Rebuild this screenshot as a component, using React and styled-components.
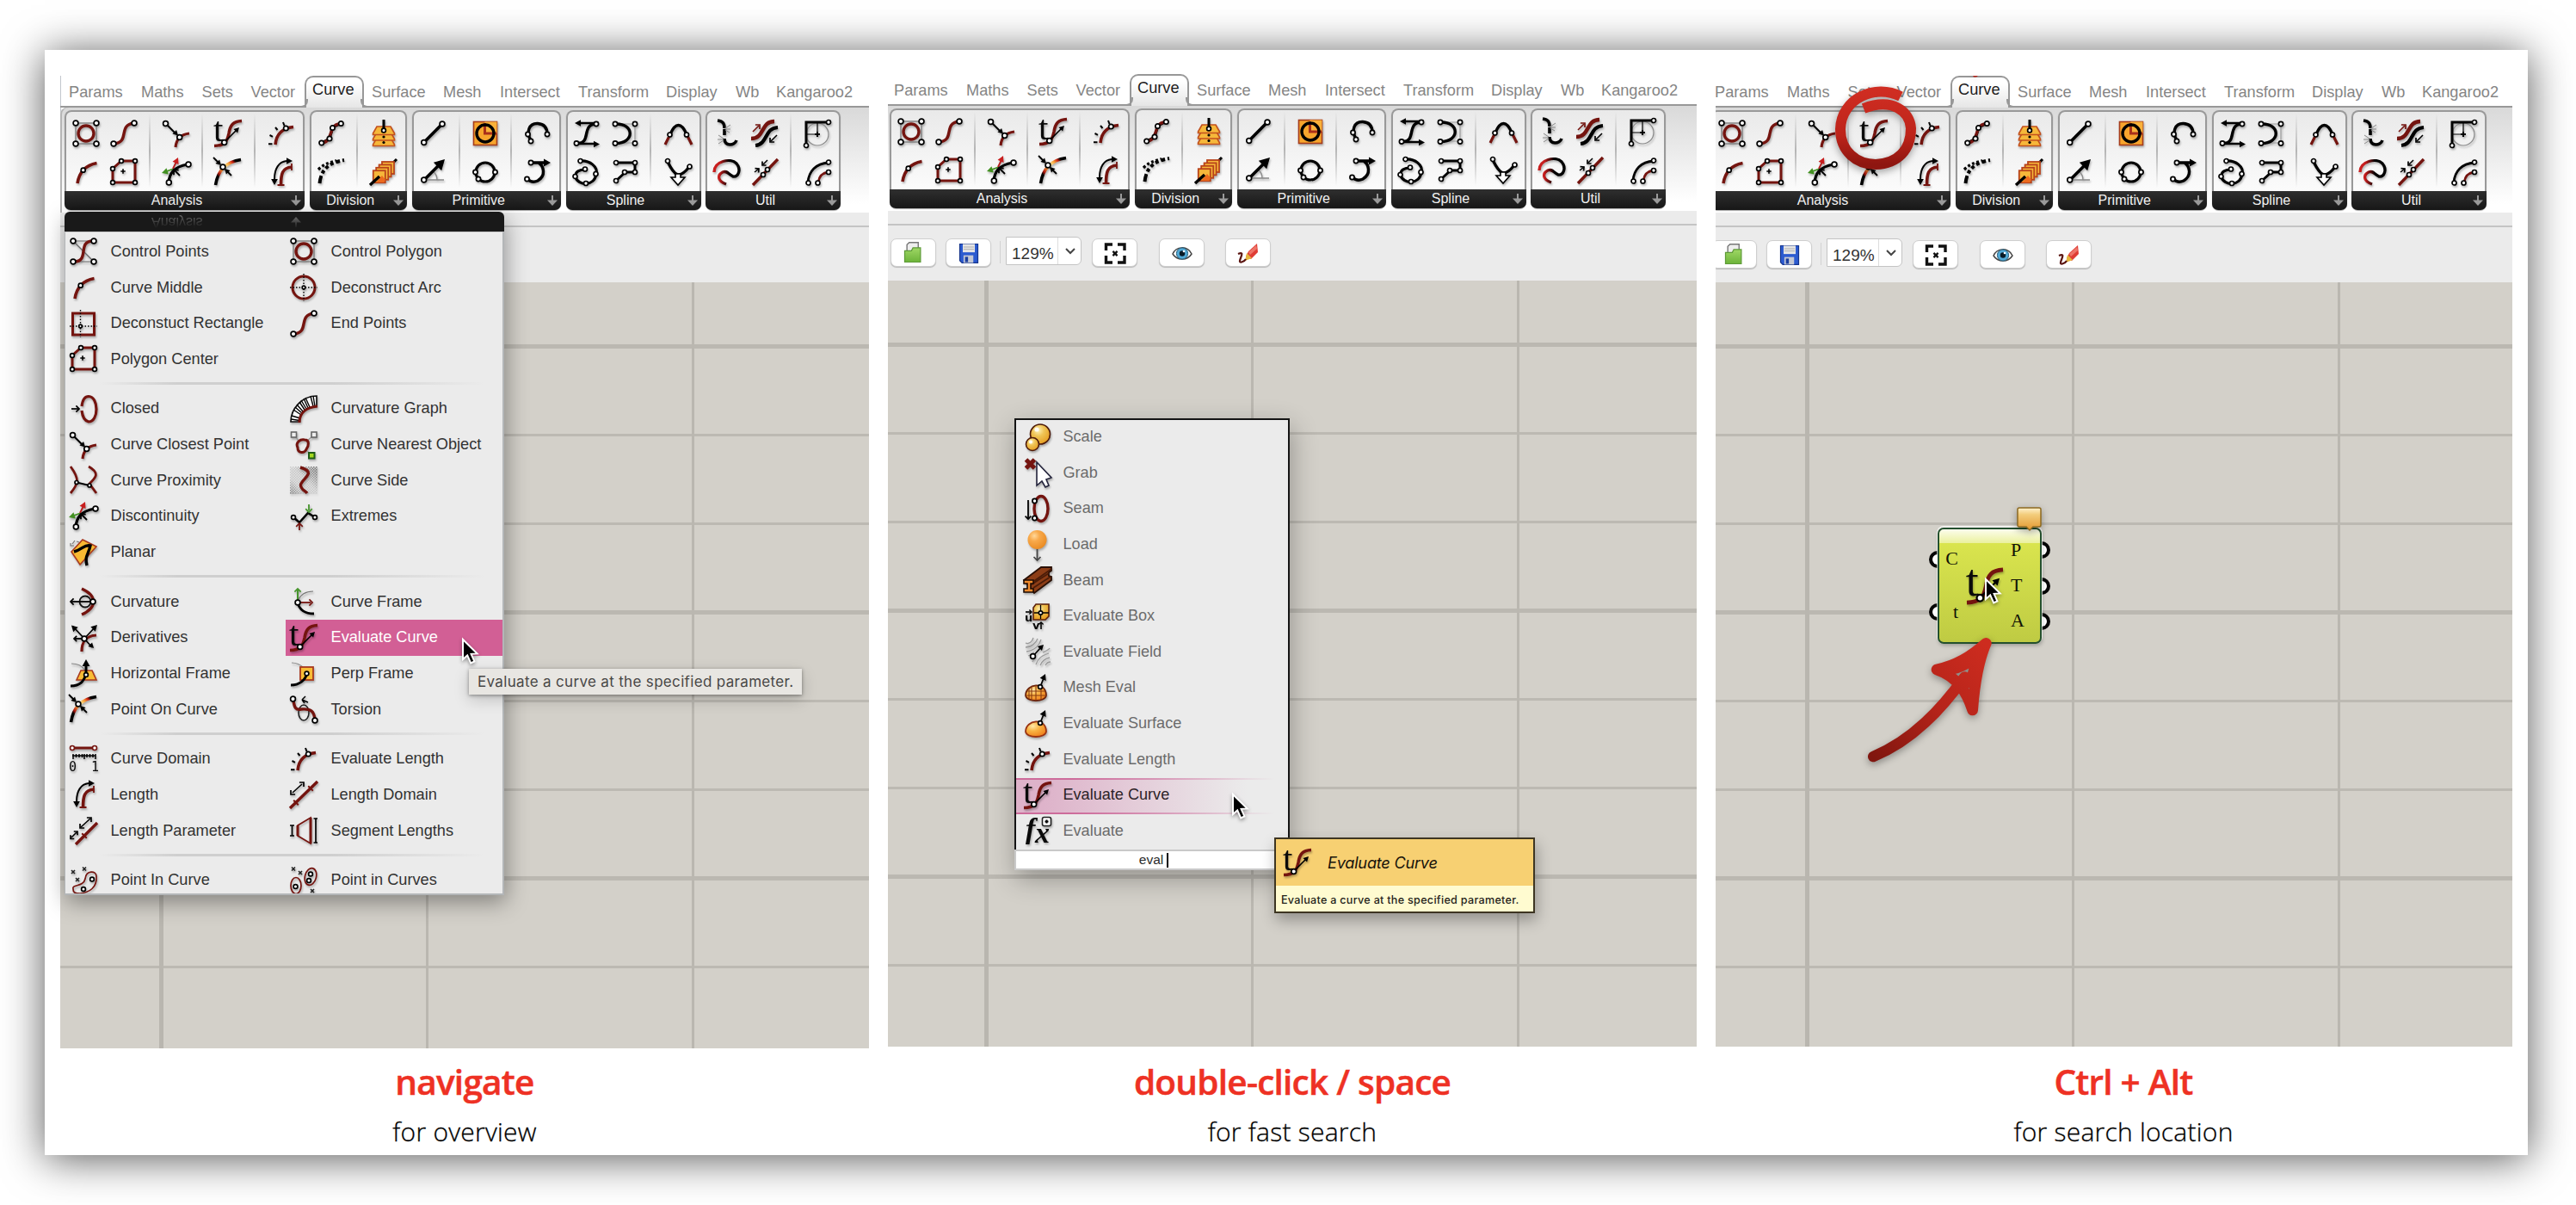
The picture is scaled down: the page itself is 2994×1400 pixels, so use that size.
import React from 'react';
import styled, { createGlobalStyle, css } from 'styled-components';

const GlobalStyle = createGlobalStyle`
  * { box-sizing: border-box; }
  body { margin: 0; background: #fff; font-family: "Liberation Sans", Arial, sans-serif; }
`;

const RED = '#74140f';

/* ---------- icon primitives ---------- */

const HiddenSvg = styled.svg`
  position: absolute;
  width: 0;
  height: 0;
`;

const IconText = styled.text`
  font-family: ${(p) => (p.$mono ? '"DejaVu Sans Mono", monospace' : p.$sans ? '"DejaVu Sans", sans-serif' : '"Liberation Serif", serif')};
  font-size: ${(p) => p.$size}px;
  font-weight: ${(p) => (p.$sans || p.$italic ? 700 : 400)};
  font-style: ${(p) => (p.$italic ? 'italic' : 'normal')};
  fill: #0a0a0a;
`;

const IconSvg = styled.svg`
  width: ${(p) => p.$size}px;
  height: ${(p) => p.$size}px;
  flex: none;
  overflow: visible;
  filter: ${(p) => (p.$flat ? 'none' : 'drop-shadow(1px 2px 1px rgba(0, 0, 0, 0.28))')};
`;

const D = ({ x, y, r = 2.9 }) => <circle cx={x} cy={y} r={r} fill="#fff" stroke="#000" strokeWidth="1.7" />;
const L = ({ d, c = '#000', w = 1.7, ...rest }) => (
  <path d={d} fill="none" stroke={c} strokeWidth={w} {...rest} />
);
const A = ({ x, y, a = 0, s = 6, c = '#000' }) => (
  <path d={`M0 0 L${-s} ${-s * 0.55} L${-s} ${s * 0.55} Z`} fill={c} transform={`translate(${x} ${y}) rotate(${a})`} />
);
const O = ({ x, y, a = 0, s = 5, c = '#000', w = 1.7 }) => (
  <path d={`M${-s} ${-s} L0 0 L${-s} ${s}`} fill="none" stroke={c} strokeWidth={w} transform={`translate(${x} ${y}) rotate(${a})`} />
);
const X = ({ x, y, s = 2, c = '#222', w = 1.6 }) => (
  <L c={c} w={w} d={`M${x - s} ${y - s} L${x + s} ${y + s} M${x + s} ${y - s} L${x - s} ${y + s}`} />
);

const GradientDefs = () => (
  <HiddenSvg aria-hidden="true">
    <defs>
      <linearGradient id="heat" gradientUnits="userSpaceOnUse" x1="1" y1="31" x2="31" y2="1">
        <stop offset="0.22" stopColor="#000" />
        <stop offset="0.3" stopColor="#b01a10" />
        <stop offset="0.45" stopColor="#f8a33c" />
        <stop offset="0.55" stopColor="#fff0a0" />
        <stop offset="0.68" stopColor="#f8a33c" />
        <stop offset="0.78" stopColor="#d02414" />
        <stop offset="0.86" stopColor="#000" />
      </linearGradient>
      <radialGradient id="gold" cx="0.4" cy="0.3" r="0.75">
        <stop offset="0" stopColor="#fff2b8" />
        <stop offset="0.4" stopColor="#efc455" />
        <stop offset="1" stopColor="#e59a1c" />
      </radialGradient>
      <radialGradient id="amber" cx="0.35" cy="0.3" r="0.8">
        <stop offset="0" stopColor="#ffd89a" />
        <stop offset="0.35" stopColor="#f8a94a" />
        <stop offset="1" stopColor="#e8871d" />
      </radialGradient>
      <radialGradient id="dome" cx="0.35" cy="0.3" r="0.8">
        <stop offset="0" stopColor="#ffe9a8" />
        <stop offset="0.4" stopColor="#f9b444" />
        <stop offset="1" stopColor="#ee7a17" />
      </radialGradient>
      <linearGradient id="ring" x1="0" y1="0" x2="0" y2="1">
        <stop offset="0" stopColor="#cf2d22" />
        <stop offset="0.6" stopColor="#bd241a" />
        <stop offset="1" stopColor="#8e1610" />
      </linearGradient>
      <linearGradient id="marker" gradientUnits="userSpaceOnUse" x1="500" y1="560" x2="110" y2="960">
        <stop offset="0" stopColor="#cd2c1f" />
        <stop offset="0.5" stopColor="#b5241a" />
        <stop offset="1" stopColor="#80160f" />
      </linearGradient>
      <linearGradient id="swirl" x1="0" y1="0" x2="1" y2="0">
        <stop offset="0.2" stopColor="#c81e1e" />
        <stop offset="0.6" stopColor="#000" />
      </linearGradient>
      <linearGradient id="leaf" x1="0" y1="0" x2="0" y2="1">
        <stop offset="0" stopColor="#9fd765" />
        <stop offset="1" stopColor="#6cb339" />
      </linearGradient>
      <pattern id="halftone" width="3" height="3" patternUnits="userSpaceOnUse">
        <rect width="1.5" height="1.5" fill="#777" />
        <rect x="1.5" y="1.5" width="1.5" height="1.5" fill="#777" />
      </pattern>
      <linearGradient id="sideFade" x1="0" y1="1" x2="1" y2="0">
        <stop offset="0" stopColor="#fff" />
        <stop offset="0.3" stopColor="#444" />
        <stop offset="0.55" stopColor="#444" />
        <stop offset="0.9" stopColor="#fff" />
      </linearGradient>
      <mask id="sideMask"><rect width="32" height="32" fill="url(#sideFade)" /></mask>
    </defs>
  </HiddenSvg>
);

/* ---------- icon drawings on a 32 x 32 grid ---------- */

const icons = {
  controlPolygon: (
    <>
      <rect x="4" y="4" width="24" height="24" fill="none" stroke="#777" strokeWidth="1.3" />
      <circle cx="16" cy="16" r="9" fill="none" stroke={RED} strokeWidth="3.4" />
      <D x={4} y={4} /><D x={28} y={4} /><D x={4} y={28} /><D x={28} y={28} />
    </>
  ),
  controlPoints: (
    <>
      <L c="#666" w={1.2} d="M4 4H28M4 28H28M4 4L28 28" />
      <L c={RED} w={3.4} d="M5 28C24 28 8 4 27 4" />
      <D x={4} y={4} /><D x={28} y={4} /><D x={4} y={28} /><D x={28} y={28} />
    </>
  ),
  endPoints: (
    <>
      <L c={RED} w={3.4} d="M4 28C24 27 8 6 28 4" />
      <D x={4} y={28} /><D x={28} y={4} />
    </>
  ),
  curveMiddle: (
    <>
      <L c={RED} w={3.6} d="M6 29C8 16 15 8 28.5 5.5" />
      <D x={12.7} y={13.7} r={2.5} />
    </>
  ),
  polygonCenter: (
    <>
      <L c={RED} w={3} d="M3 28H29V3H13L3 12Z" />
      <L w={1.6} d="M12.3 15H17.7M15 12.3V17.7" />
      <D x={3} y={28} r={2.4} /><D x={29} y={28} r={2.4} /><D x={29} y={3} r={2.4} /><D x={13} y={3} r={2.4} /><D x={3} y={12} r={2.4} />
    </>
  ),
  deconstructArc: (
    <>
      <circle cx="16" cy="16" r="13" fill="none" stroke={RED} strokeWidth="3" />
      <L w={1.4} strokeDasharray="1.6 1.9" d="M0 16H32M16 0V32" />
      <D x={16} y={16} r={1.8} />
    </>
  ),
  deconstructRect: (
    <>
      <rect x="3.5" y="4" width="25" height="25" fill="none" stroke={RED} strokeWidth="3" />
      <L w={1.4} strokeDasharray="1.6 1.9" d="M0 19H32M12.5 0V32" />
      <D x={12.5} y={19} r={1.8} />
    </>
  ),
  closed: (
    <>
      <L c={RED} w={3.2} d="M14 13C15 5 18 1.5 22 1.5C34 2 34 31 22 31C18 30 15 27 14 18" />
      <L w={1.7} d="M2 16H10" /><O x={11} y={16} s={3.6} />
    </>
  ),
  curvatureGraph: (
    <>
      <path d="M1 31C1 16 14 1 31 1V13C20 14 11 20 11 31Z" fill="#fff" stroke="#111" strokeWidth="1.7" />
      <L w={1.4} d="M2 24L12 27M4 17L13 23M8 11L15 19M13 6L19 16M18 3L23 14M24 1.5L27 13M1.5 28L11 29.5M6 14L14 21M11 8L17 17M16 4L21 15M27 1L29 13" />
      <L c={RED} w={3.2} d="M11 32C11 20 20 14 32 13" />
    </>
  ),
  closestPoint: (
    <>
      <L w={1.9} d="M3.5 4.5L15 16" /><A x={18} y={18.5} a={45} s={6} />
      <L c={RED} w={3.2} d="M15 32C16 22 22 17 31 16" />
      <D x={3.5} y={4.5} /><D x={19.7} y={20.5} />
    </>
  ),
  nearestObject: (
    <>
      <L c="#999" w={1.3} d="M6 6L11 12M26 6L19 12M19 22L25 28" />
      <path d="M9 19C6 13 12 9 17 10C23 10 22 17 19 21C17 26 9 26 9 19Z" fill="none" stroke={RED} strokeWidth="3" />
      <rect x="1.5" y="1" width="6" height="6" fill="#eee" stroke="#666" strokeWidth="1.6" />
      <rect x="25" y="1" width="6" height="6" fill="#eee" stroke="#666" strokeWidth="1.6" />
      <rect x="22" y="25" width="6.5" height="6.5" fill="#a4d81f" stroke="#1f5c16" strokeWidth="2" />
    </>
  ),
  proximity: (
    <>
      <L c={RED} w={2.8} d="M1 0C12 15 10 20 1 31M22 0C38 9 27 15 23 20L31 31" />
      <L w={2.2} d="M8 18.5L23 22" />
      <D x={8} y={18.5} r={2} /><D x={23} y={22} r={2} />
    </>
  ),
  side: (
    <>
      <rect width="32" height="32" fill="url(#halftone)" mask="url(#sideMask)" />
      <L c={RED} w={3.4} d="M12 1C32 7 14 14 12.5 21C12 27 18 28 20 31" />
    </>
  ),
  discontinuity: (
    <>
      <L c="#429020" w={1.8} d="M13 12L2 16" /><A x={-1} y={17} a={162} s={7} c="#429020" />
      <L c="#b62020" w={2} d="M12 12L17 2" /><A x={18} y={-1} a={-65} s={7} c="#c81e1e" />
      <L w={3.2} d="M7 28C8 18 12 10 29 7" />
      <L w={1.8} d="M20 20L14 14" /><O x={13} y={13.5} a={45} s={-4} w={1.8} />
      <D x={30} y={7} /><D x={7.3} y={28} />
    </>
  ),
  extremes: (
    <>
      <L w={2.6} d="M4 17L11 23L21 12L29 17" />
      <L c="#46952c" w={1.8} d="M22 2V9" /><O x={22} y={11} a={90} s={3.8} c="#46952c" />
      <L c={RED} w={1.8} d="M11 32V25" /><O x={11} y={24} a={-90} s={3.8} c={RED} />
      <D x={4} y={17} r={2.4} /><D x={29} y={17} r={2.4} />
    </>
  ),
  planar: (
    <>
      <path d="M15 1L31 9L12 30L2 15Z" fill="#f8b932" stroke="#a8391e" strokeWidth="1.6" />
      <L w={3.4} d="M5 15C16 12 17 6 24 8C22 18 17 20 20 31" />
      <L c="#777" w={1.2} d="M3 6L6 2M1 5V8H5M8 3L11 4" />
    </>
  ),
  curvature: (
    <>
      <L c={RED} w={3.4} d="M14 1C32 9 32 23 14 31" />
      <circle cx="18" cy="16" r="6.5" fill="none" stroke="#111" strokeWidth="1.8" />
      <L w={1.8} d="M26 16H2" /><O x={1} y={16} a={180} s={3.6} />
      <D x={27} y={16} />
    </>
  ),
  curveFrame: (
    <>
      <L w={2.8} d="M9 17C11 26 17 30 28 30" />
      <L c="#777" w={1.2} d="M9 15C12 8 18 4 27 4" />
      <L c="#46952c" w={2} d="M9 15V2" /><O x={9} y={1} a={-90} s={3.6} c="#46952c" />
      <L c={RED} w={1.8} d="M10 17H24" /><O x={26} y={17} s={3.6} c={RED} />
      <D x={9} y={17} />
    </>
  ),
  derivatives: (
    <>
      <L c={RED} w={3.2} d="M14 32C14 22 17 14 31 13" />
      <L w={1.8} d="M17 17L4 3M17 17L30 3M17 17L26 27M17 17H6" />
      <A x={2} y={1.5} a={-135} s={7} /><A x={32} y={1} a={-45} s={7} /><A x={28} y={28} a={45} s={6} /><O x={5} y={17} a={180} s={3.2} />
      <D x={17} y={17} />
    </>
  ),
  horizontalFrame: (
    <>
      <L c="#888" w={1.1} d="M2 4C9 4 14 6 17 11" />
      <path d="M13 12H26L31 23H8Z" fill="#f8bd36" stroke="#a8391e" strokeWidth="1.6" />
      <L w={3} d="M1 30C13 30 16 24 19 17" />
      <L w={3} d="M19 17V6" /><A x={19} y={-1} a={-90} s={8} />
      <D x={19} y={17} r={2.4} />
    </>
  ),
  perpFrame: (
    <>
      <L c="#888" w={1.1} d="M2 3C8 3 12 5 16 9" />
      <rect x="12" y="8" width="15" height="15" fill="#f8bd36" stroke="#a8391e" strokeWidth="1.8" />
      <L w={3} d="M1 29C11 29 18 23 19.5 16" />
      <D x={19.5} y={15.5} r={2.4} />
    </>
  ),
  pointOnCurve: (
    <>
      <L c="url(#heat)" w={3.6} d="M1.5 31C4 14 14 4 31 1.5" />
      <L w={1.8} d="M-1 -1L6 6M20 20L13 13" />
      <A x={8} y={8} a={45} s={6} /><A x={12} y={12} a={-135} s={6} />
      <D x={10} y={10} />
    </>
  ),
  torsion: (
    <>
      <ellipse cx="16" cy="20" rx="6" ry="9" fill="none" stroke="#222" strokeWidth="1.6" />
      <L c={RED} w={3.4} d="M4 5C5 15 7 17 13 16C24 15 28 18 29 28" />
      <L w={1.5} d="M21 8L14 5M14 5L18 1M14 5L17 9" />
      <D x={3.5} y={4} /><D x={29} y={29} />
    </>
  ),
  curveDomain: (
    <>
      <L c={RED} w={3} d="M3 3H29" />
      <circle cx="3" cy="3" r="2.5" fill="#fff" stroke={RED} strokeWidth="1.6" />
      <circle cx="29" cy="3" r="2.5" fill="#fff" stroke={RED} strokeWidth="1.6" />
      <L w={1.5} d="M3 12H30M4 10V16M7.5 10V14M11 10V14M14.5 10V14M17 10V16M20 10V14M23.5 10V14M27 10V14M30 10V16" />
      <IconText x="-1" y="30" $size={15} $mono>0</IconText>
      <IconText x="25" y="30" $size={15} $mono>1</IconText>
    </>
  ),
  evaluateLength: (
    <>
      <L c={RED} w={3.6} d="M9 29C10 18 16 10 30 8.5" />
      <L w={2} d="M1 28.3H5.5M2.5 18L6 19.8M9 9L11.5 12M18 3L19.5 7" />
      <D x={21.3} y={10} r={2.7} />
    </>
  ),
  length: (
    <>
      <L w={2} d="M8 24C8 12 13 4 22 3" />
      <A x={29} y={3} a={0} s={7} /><A x={8} y={31} a={90} s={7} />
      <L c={RED} w={3.6} d="M15.5 31C15.5 18 17 11 28 10" />
      <L c={RED} w={1.8} d="M11.5 31H19.5M28 6V14" />
    </>
  ),
  lengthDomain: (
    <>
      <L c={RED} w={3.4} d="M0 32L32 1" />
      <X x={7} y={25.5} s={2.8} c={RED} w={2} /><X x={24} y={9} s={2.8} c={RED} w={2} />
      <L w={1.6} d="M3 14L14 4" /><O x={1} y={16} a={135} s={3.6} /><O x={16} y={2} a={-45} s={3.6} />
    </>
  ),
  lengthParameter: (
    <>
      <L c={RED} w={3.4} d="M7 32L32 7" />
      <X x={17} y={22} s={2.8} c={RED} w={2} />
      <L w={1.6} d="M13 12L24 2M2 24L8 18" /><O x={12} y={13} a={135} s={3.6} /><O x={25} y={1} a={-45} s={3.6} /><O x={1} y={25.5} a={135} s={3} /><O x={9} y={17} a={-45} s={3} />
    </>
  ),
  segmentLengths: (
    <>
      <L c={RED} w={1.8} d="M9 10L24 1V31L9 22Z" />
      <L c={RED} w={3} d="M9 10V22M24 1V31" />
      <L w={1.7} d="M2.5 10V22M0 10H5M0 22H5M30 2V30M27.5 2H32M27.5 30H32" />
    </>
  ),
  pointInCurve: (
    <>
      <L c={RED} w={1.7} d="M4 26C2 20 16 24 18 14C19 4 31 4 31 11C32 24 23 30 12 31C6 31 4 30 4 26Z" />
      <X x={4} y={6} /><X x={17} y={2.5} /><X x={9} y={15} />
      <D x={26} y={14.5} r={2.4} /><D x={16} y={26} r={2.4} />
    </>
  ),
  pointInCurves: (
    <>
      <ellipse cx="7" cy="22" rx="6" ry="9.5" fill="none" stroke={RED} strokeWidth="1.7" />
      <ellipse cx="24" cy="11.5" rx="6.5" ry="10" fill="none" stroke={RED} strokeWidth="1.7" transform="rotate(15 24 11.5)" />
      <X x={4} y={2.5} /><X x={12} y={7} /><X x={26} y={28} />
      <D x={24} y={8.5} r={2.4} /><D x={22} y={16} r={2.4} /><D x={6.5} y={23} r={2.4} />
    </>
  ),
  evaluateCurve: (
    <>
      <L c={RED} w={3.6} d="M0 30.5C12 30 15 26 17 16C18.5 6 22 2 32 1.5" />
      <L w={1.7} d="M12 26L26 12" /><A x={29} y={9} a={-45} s={6} />
      <IconText x="-1" y="24.5" $size={41}>t</IconText>
      <D x={11.7} y={26.5} r={2.9} />
    </>
  ),
  divide: (
    <>
      <L w={3} d="M4.7 27L14 22L18 9L27 4.5" />
      <L c={RED} w={3.4} d="M6 27C14 26 14 18 17.5 10M18 10C20 6 22 5 27 5" />
      <D x={4.7} y={27} r={2.7} /><D x={14} y={22} r={2.7} /><D x={17.5} y={9.5} r={2.7} /><D x={27.3} y={4.5} r={2.7} />
    </>
  ),
  dash: (
    <>
      <L w={4} strokeDasharray="9 3 4 3 4 3 4 3 5 3 5" d="M2.5 29C4 14 12 5 31 2" />
      <L w={3.2} strokeDasharray="3 2.6" d="M1 13C8 6 14 5 22 2.5" />
    </>
  ),
  contour: (
    <>
      {[21, 14.5, 8].map((y) => (
        <path key={y} d={`M8 ${y}H24L28.5 ${y + 8}V${y + 9.5}H3.5V${y + 8}Z`} fill="#f6b73a" stroke="#c2501e" strokeWidth="1.6" />
      ))}
      <L w={3} d="M16 0V10" /><D x={16} y={12.5} r={2.4} />
      <circle cx="16" cy="20" r="1.6" /><circle cx="16" cy="26.5" r="1.6" />
    </>
  ),
  frames: (
    <>
      <L w={3} d="M26 6L31 1" />
      {[0, 1, 2, 3].map((i) => (
        <rect key={i} x={14 - i * 3.4} y={4 + i * 3.4} width="14" height="14" fill="#f6b73a" stroke="#b8431b" strokeWidth="1.8" />
      ))}
      <path d="M7 28L14 20L18 25L16 28Z" fill="#ec6a1e" />
      <L w={3.4} d="M0 31L11 21" />
    </>
  ),
  line: (<><L w={3.6} d="M4.7 26.5L26 5" /><D x={4.7} y={26.5} /><D x={26} y={5} /></>),
  vectorLine: (
    <>
      <L c="#888" w={1.3} d="M5 25H28M20 25C20 20 18 17 15 15" />
      <L w={3.6} d="M5 25L22 8" /><A x={29} y={1} a={-45} s={12} /><D x={4.7} y={25} />
    </>
  ),
  circle: (
    <>
      <rect x="2.5" y="2.5" width="27" height="27" fill="#f7a52d" stroke="#a63c1c" strokeWidth="1.6" />
      <path d="M15.5 2.5H29.5V16H15.5Z" fill="#f9b13a" /><L c="#a9301a" w={3} d="M15.5 4V16H29" />
      <circle cx="16" cy="16" r="10" fill="none" stroke="#000" strokeWidth="3.4" />
    </>
  ),
  circle3: (
    <>
      <circle cx="16" cy="16" r="11" fill="none" stroke="#000" strokeWidth="3.2" />
      <D x={4.5} y={16} r={2.6} /><D x={27.5} y={16} r={2.6} /><D x={8} y={24} r={2.6} />
    </>
  ),
  arc: (
    <>
      <L w={3.4} d="M8 24C2 14 6 4 16 4.5C24 5 27 10 27 17" />
      <D x={4.5} y={17} r={2.6} /><D x={27} y={17} r={2.6} /><D x={8} y={25} r={2.6} />
    </>
  ),
  arcSed: (
    <>
      <L w={3.4} d="M4 24C8 28 12 28 16 26C26 20 23 9 17 5M8 5H25" /><A x={31} y={5} s={8} />
      <D x={8} y={5} r={2.6} /><D x={3.5} y={24} r={2.6} />
    </>
  ),
  tangentCurve: (
    <>
      <L w={3.4} d="M5 27.5C22 28 9 5 27 5" /><L w={2.4} d="M8 4H27M4 28H24" />
      <A x={2} y={4} a={180} s={7} /><A x={31} y={28.5} s={7} />
      <D x={27} y={5} r={2.6} /><D x={4} y={27.5} r={2.6} />
    </>
  ),
  bezier: (
    <>
      <L c="#999" w={1.2} d="M4 5H27V27H4" />
      <L w={3.4} d="M4 5C27 4 27 28 4 27.5" />
      <D x={4} y={5} r={2.6} /><D x={27} y={5} r={2.6} /><D x={4} y={27.5} r={2.6} /><D x={27} y={27.5} r={2.6} />
    </>
  ),
  interpolate: (
    <>
      <L w={3.2} d="M8 3C20 2 29 10 27 18C25 33 6 32 3 22C2 15 8 13 14 13" />
      <D x={8.5} y={3} r={2.5} /><D x={26.5} y={18} r={2.5} /><D x={15} y={29} r={2.5} /><D x={2.5} y={21} r={2.5} /><D x={14} y={12.5} r={2.5} />
    </>
  ),
  polyline: (
    <>
      <L w={3} d="M5 5H27V16H16L5 26" />
      <D x={5} y={5} r={2.5} /><D x={27} y={5} r={2.5} /><D x={27} y={16} r={2.5} /><D x={15} y={16} r={2.5} /><D x={5} y={26} r={2.5} />
    </>
  ),
  blend: (
    <>
      <L c={RED} w={3.2} d="M1 29L7 17M26 17L32 29" />
      <L w={3.4} d="M7 17C13 3 20 3 26 17" />
      <D x={6.5} y={17.5} r={2.5} /><D x={26} y={17.5} r={2.5} />
    </>
  ),
  catenary: (
    <>
      <L w={3.4} d="M4 4C12 20 17 25 29 10" />
      <path d="M13 18H19V22H24L16 31L8 22H13Z" fill="#fff" stroke="#000" strokeWidth="1.6" />
      <D x={4} y={3} r={2.5} /><D x={29.5} y={9.5} r={2.5} />
    </>
  ),
  explode: (
    <>
      <L w={3.6} d="M5 1C12 2 13 5 13 10M13 11V18M13 22C13 32 25 30 27 24" />
      <L c="#888" w={1} d="M14 10L20 6M14 11H20M14 12L19 15M12 22L6 18M12 23H5M12 24L6 28" />
    </>
  ),
  flip: (
    <>
      <L c={RED} w={4.6} d="M0 22C16 22 11 2 27 2" />
      <L w={4.2} d="M5 30C20 28 15 10 31 9" />
      <L c={RED} w={1.6} d="M2 14L9 7" /><O x={10} y={6} a={-45} s={3.6} c={RED} />
      <L w={1.6} d="M30 18L23 25" /><O x={22} y={26} a={135} s={3.6} />
    </>
  ),
  rebuild: (
    <path d="M1 16C1 3 20 -1 27 6C33 13 29 22 23 21C17 18 16 14 11 16C5 19 4 26 15 30" fill="none" stroke="url(#swirl)" strokeWidth="3.4" />
  ),
  join: (
    <>
      <L c={RED} w={3.4} d="M2 31L31 1" />
      <L w={1.5} d="M4 16L9 12M19 2L14 7" /><O x={9} y={12} a={-40} s={3.2} /><O x={13} y={8} a={135} s={3.2} />
      <D x={14} y={19} r={2.5} /><D x={19} y={13} r={2.5} />
    </>
  ),
  fillet: (
    <>
      <circle cx="16" cy="17" r="13" fill="none" stroke="#888" strokeWidth="1.2" />
      <L w={1.2} d="M3 17H16V4" /><path d="M13 17H19M16 14V20" stroke="#000" strokeWidth="2" />
      <L w={3} d="M3 30V3H29" />
      <D x={3} y={30} r={2.5} /><D x={29} y={3} r={2.5} />
    </>
  ),
  offset: (
    <>
      <L w={2.8} d="M5 28C6 15 14 6 29 5" />
      <L c={RED} w={2.8} d="M17 28C18 21 21 17 29 16" />
      <D x={5.5} y={28.5} r={2.5} /><D x={29} y={4.5} r={2.5} /><D x={16.5} y={28.5} r={2.5} /><D x={29} y={16} r={2.5} />
    </>
  ),
  scale: (
    <>
      <circle cx="19" cy="12.5" r="11.5" fill="url(#gold)" stroke="#4d1a0a" strokeWidth="1.6" />
      <circle cx="10" cy="24" r="7.5" fill="url(#gold)" stroke="#4d1a0a" strokeWidth="1.6" />
      <circle cx="8" cy="21.5" r="2" fill="#fff" /><circle cx="15" cy="7" r="2.6" fill="#fff" opacity="0.9" />
    </>
  ),
  grab: (
    <>
      <X x={7.5} y={6} s={5} c={RED} w={5} />
      <path d="M15 4V31L21 26L25 33L29 31L26 24L32 22Z" fill="#fff" stroke="#24243c" strokeWidth="1.6" />
    </>
  ),
  seam: (
    <>
      <ellipse cx="20" cy="16" rx="8" ry="14.5" fill="none" stroke={RED} strokeWidth="3.4" />
      <L w={1.8} d="M5 6V27" /><O x={5} y={28} a={90} s={3.4} />
      <D x={12.5} y={7} r={2.6} /><D x={12.5} y={27} r={2.6} />
    </>
  ),
  load: (
    <>
      <L c="#444" w={1.8} d="M15.5 20V33" /><O x={15.5} y={34} a={90} s={4} c="#444" />
      <circle cx="15.5" cy="10" r="11" fill="url(#amber)" />
    </>
  ),
  beam: (
    <>
      <path d="M0 16L20 1H32V5L29 7V11L32 12V16L12 31Z" fill="#8c3d16" stroke="#2a1005" strokeWidth="1.8" />
      <L c="#4a1c08" w={1.6} d="M12 17L32 3M9 21L29 8M11 25L31 12" />
      <path d="M0 16H11V20H8V26H11V30H0V26H4V20H0Z" fill="#ef8a2c" stroke="#1d0b03" strokeWidth="1.6" />
    </>
  ),
  evaluateBox: (
    <>
      <path d="M14 2H29V16L25 20H11V6Z" fill="url(#gold)" stroke="#5a210c" strokeWidth="1.6" />
      <L w={1.3} d="M19.5 3V19M12 12H29" /><D x={19.5} y={12} r={2.2} />
      <L w={1.6} d="M2 11H8" /><O x={9} y={11} s={2.6} w={1.4} />
      <L w={1.6} d="M20 31V24" /><O x={20} y={23} a={-90} s={2.6} w={1.4} />
      <IconText x="1" y="22" $size={13} $sans>u</IconText><IconText x="10" y="31" $size={13} $sans>v</IconText>
    </>
  ),
  evaluateField: (
    <>
      <L c="#999" w={1.3} d="M2 6C6 8 10 4 11 0M2 11C9 11 14 6 16 1M3 16C12 15 18 9 20 2M5 21C8 20 10 18 12 17M14 31C16 24 22 20 29 18M19 32C21 27 25 24 30 23M25 32C26 30 28 28 31 28M10 28C11 26 12 25 13 23M22 17C26 15 29 14 30 12" />
      <L w={1.8} d="M10 22L20 11" /><A x={23} y={8} a={-45} s={6.5} /><D x={10.5} y={21.5} />
    </>
  ),
  meshEval: (
    <>
      <path d="M2 25C2 11 26 8 26 25C25 33 3 33 2 25Z" fill="url(#dome)" stroke="#6b230c" strokeWidth="1.8" />
      <L c="#8a3a10" w={1.1} d="M3 20H25M2 25H26M9 14V31M14 13V31M20 14V30M6 17V29" />
      <L w={1.8} d="M19 15L23 5" /><A x={25} y={0} a={-66} s={7} /><D x={19} y={15} r={2.4} />
    </>
  ),
  evaluateSurface: (
    <>
      <path d="M2 25C2 11 26 8 26 25C25 33 3 33 2 25Z" fill="url(#dome)" stroke="#9a3312" strokeWidth="1.8" />
      <L w={1.8} d="M19 15L23 5" /><A x={25} y={0} a={-66} s={7} /><D x={19} y={15} r={2.4} />
    </>
  ),
  evaluate: (
    <>
      <IconText x="2" y="25" $size={34} $italic>f</IconText>
      <IconText x="13" y="30" $size={34} $italic>x</IconText>
      <rect x="21.5" y="0.5" width="10" height="10" rx="2" fill="#fff" stroke="#222" strokeWidth="1.6" />
      <L w={2} d="M24.5 5.5H28.5M26.5 3.5V7.5" />
    </>
  ),
  open: (
    <>
      <path d="M7 14V5L10 2H22V14Z" fill="#eee" stroke="#777" strokeWidth="1.6" />
      <path d="M4 28V13H13L15 9H25V28Z" fill="url(#leaf)" stroke="#5d9a37" strokeWidth="1.4" />
    </>
  ),
  save: (
    <>
      <path d="M4 4H28V29H7L4 26Z" fill="#2c5bd0" stroke="#16358c" strokeWidth="1.4" />
      <rect x="8" y="4" width="16" height="11" fill="#e5e5e5" /><L c="#aaa" w={1} d="M9 8H23M9 11H23" />
      <rect x="9" y="19" width="13" height="10" fill="#c4c8d4" /><rect x="11" y="21" width="4" height="7" fill="#1c3f9f" />
    </>
  ),
  extents: (
    <>
      <L c="#111" w={3.4} d="M5.5 13V6H13M19 6H27V13M27 19V27H19M13 27H5.5V19" />
      <X x={16} y={16.5} s={2.6} c="#111" w={2.2} /><circle cx="16" cy="16.5" r="1.8" fill="#111" />
    </>
  ),
  eye: (
    <>
      <path d="M5 17C9 8 22 7 27 17C22 25 10 25 5 17Z" fill="#fff" stroke="#444" strokeWidth="1.5" />
      <circle cx="16" cy="16.5" r="6.6" fill="#51a9d6" stroke="#28617e" strokeWidth="1" />
      <circle cx="16" cy="16.5" r="3.2" fill="#081a26" /><circle cx="18" cy="14" r="1.3" fill="#fff" />
    </>
  ),
  sketch: (
    <>
      <path d="M26 5L27 15L19 23L13 20L16 14Z" fill="#df3d35" />
      <path d="M25 7L16 15L18 18L26 11Z" fill="#ee7468" />
      <path d="M14 16L20 22L12 25Z" fill="#e6b53c" />
      <L c="#5a1410" w={2.2} d="M4 17C15 12 1 28 8 26.5C10 26 12 25 13 23" />
    </>
  ),
};

const Icon = ({ name, size = 32, flat }) => (
  <IconSvg viewBox="0 0 32 32" $size={size} $flat={flat}>{icons[name]}</IconSvg>
);

/* ---------- page ---------- */

const Page = styled.main`
  width: 2994px;
  height: 1400px;
  padding: 58px 52px;
  background: #fff;
  overflow: hidden;
`;

const Card = styled.div`
  display: flex;
  gap: 22px;
  width: 2886px;
  height: 1284px;
  padding-left: 18px;
  background: #fff;
  box-shadow: 0 4px 46px rgba(0, 0, 0, 0.66);
`;

const Column = styled.section`
  width: ${(p) => p.$width}px;
  padding-top: ${(p) => p.$top}px;
`;

const Panel = styled.div`
  position: relative;
  display: flex;
  flex-direction: column;
  height: ${(p) => p.$height}px;
  overflow: ${(p) => (p.$framed ? 'visible' : 'hidden')};
  box-shadow: ${(p) => (p.$framed ? 'inset 1px 0 #c2c6cd' : 'none')};
`;

const TabStrip = styled.nav`
  display: flex;
  flex: none;
  height: 37px;
  border-bottom: 2px solid #989898;

  > :first-child {
    margin-left: ${(p) => p.$shift + 5}px;
  }
`;

const Tab = styled.span`
  flex: none;
  width: ${(p) => p.$width}px;
  padding-top: 9px;
  font-size: 18.2px;
  line-height: 21px;
  color: #858585;
`;

const ActiveTab = styled.span`
  position: relative;
  flex: none;
  width: 69px;
  height: 37px;
  margin-right: 9px;
  padding: 4px 0 0 7px;
  border: 2px solid #989898;
  border-bottom: 0;
  border-radius: 10px 10px 0 0;
  background: linear-gradient(#fff 20%, #e6e6e6);
  font-size: 18.2px;
  line-height: 21px;
  color: #1c1c1c;

  &::before,
  &::after {
    content: '';
    position: absolute;
    bottom: 0;
    width: 8px;
    height: 8px;
    border-bottom: 2px solid #989898;
  }

  &::before {
    left: -8px;
    border-right: 2px solid #989898;
    border-bottom-right-radius: 8px;
  }

  &::after {
    right: -8px;
    border-left: 2px solid #989898;
    border-bottom-left-radius: 8px;
  }
`;

const Ribbon = styled.div`
  display: flex;
  flex: none;
  gap: 5.5px;
  height: 122px;
  padding-top: 3px;
  background: linear-gradient(#d9d9d9, #fff 92%);
  ${(p) => p.$framed && css`
    box-shadow: inset 2px 0 #b5b5b5;
    border-top-left-radius: 8px;
  `}

  > :first-child {
    margin-left: ${(p) => p.$shift}px;
  }
`;

const Group = styled.div`
  display: flex;
  flex: none;
  flex-direction: column;
  width: ${(p) => p.$width}px;
  height: 116px;
  border-radius: 8px;
  box-shadow: inset 0 0 0 2px #999, 0 1px 1px rgba(0, 0, 0, 0.35);
  background: linear-gradient(#e9e9e9, #fbfbfb 80%);
`;

const GroupBody = styled.div`
  display: flex;
  height: 94px;
`;

const Section = styled.div`
  display: flex;
  flex-wrap: wrap;
  align-content: flex-start;
  justify-content: center;
  width: ${(p) => p.$width}px;
  padding: 4px ${(p) => (p.$first ? 4 : 0)}px 0 ${(p) => (p.$last ? 4 : 0)}px;
  border-right: ${(p) => (p.$last ? 0 : 2)}px solid;
  border-image: linear-gradient(transparent 5%, #b5b5b5 50%, transparent 95%) 1;
`;

const ToolCell = styled.span`
  display: flex;
  align-items: center;
  justify-content: center;
  width: 44.5px;
  height: 45px;
`;

const GroupFooter = styled.div`
  display: flex;
  align-items: center;
  height: 22px;
  padding-right: 4px;
  border-radius: 0 0 7px 7px;
  background: linear-gradient(#2f2f2f, #171717);
  color: #f1f1f1;
  font-size: 16px;
  line-height: 20px;
`;

const GroupTitle = styled.span`
  flex: 1;
  padding-right: 2px;
  text-align: center;
`;

const FooterArrow = styled.svg`
  width: 12px;
  height: 13px;
`;

const Toolbar = styled.div`
  display: flex;
  flex: none;
  align-items: flex-start;
  height: 81px;
  padding-top: 32px;
  background: linear-gradient(#ebebeb 0 15px, #c4c4c4 15px 17px, #ebebeb 17px);

  > :first-child {
    margin-left: ${(p) => p.$shift + 1}px;
  }
`;

const ToolButton = styled.button`
  display: flex;
  align-items: center;
  justify-content: center;
  flex: none;
  width: 53px;
  height: 33px;
  margin: 0 ${(p) => p.$after}px 0 0;
  padding: 0;
  border: 1px solid #cfcfcf;
  border-radius: 7px;
  background: #fff;
  box-shadow: 0 1px 1px rgba(0, 0, 0, 0.22);
`;

const ToolDivider = styled.i`
  width: 1px;
  height: 26px;
  margin: 3px 6px 0 0;
  background: #d2d2d2;
`;

const ZoomBox = styled.div`
  display: flex;
  align-items: center;
  width: 88px;
  height: 33px;
  margin: -2px 12px 0 0;
  border: 1px solid #c4c4c4;
  border-radius: 0 6px 6px 0;
  background: #fff;
  color: #333;
  font-size: 19px;
`;

const ZoomValue = styled.span`
  width: 60px;
  padding: 6px 0 0 6px;
  border-right: 1px solid #ddd;
  line-height: 25px;
`;

const Chevron = styled.svg`
  width: 12px;
  height: 8px;
  margin-left: 8px;
`;

const Canvas = styled.div`
  flex: 1;
  background-color: #d3d0c9;
  background-image:
    linear-gradient(#b9b6af, #b9b6af),
    linear-gradient(90deg, transparent 306px, #bab7b0 306px 309px),
    linear-gradient(#bbb8b1 0 5px, transparent 5px 104px, #bcb9b2 104px 107px, transparent 107px 207px, #bcb9b2 207px 210px, transparent 210px);
  background-size: 5px 100%, 309px 100%, 100% 309px;
  background-repeat: no-repeat, repeat, repeat;
  background-position: ${(p) => p.$x - 2}px 0, ${(p) => p.$x + 2}px 0, 0 72px;
`;

const Caption = styled.div`
  margin-top: ${(p) => p.$top}px;
  padding-left: ${(p) => p.$indent || 0}px;
  text-align: center;
  font-family: "Open Sans", sans-serif;
`;

const Headline = styled.h2`
  margin: 0;
  font-size: 40.5px;
  line-height: 54px;
  font-weight: 600;
  letter-spacing: -0.75px;
  color: #ee3124;
  -webkit-text-stroke: 0.5px #ee3124;
`;

const Subline = styled.p`
  margin: 10px 0 0;
  font-size: 30px;
  line-height: 42px;
  font-weight: 300;
  letter-spacing: 0.25px;
  color: #000;
  -webkit-text-stroke: 0.3px #000;
`;

/* ---------- flyout menu ---------- */

const Menu = styled.div`
  position: absolute;
  left: 5px;
  top: 158px;
  width: 511px;
  height: 794px;
  border-radius: 6px 6px 0 0;
  background: #ebebeb;
  box-shadow: 2px 8px 26px rgba(0, 0, 0, 0.38);
  overflow: hidden;
`;

const MenuHeader = styled.div`
  display: flex;
  align-items: center;
  height: 23px;
  padding-left: 101px;
  background: #191919;
  color: #6c6c6c;
  font-size: 16px;
`;

const Mirrored = styled.span`
  display: inline-flex;
  align-items: center;
  gap: 102px;
  transform: scaleY(-1);
  mask-image: linear-gradient(transparent 10%, #000);
  line-height: 18px;
`;

const MenuBody = styled.div`
  height: 771px;
  padding-top: 1.5px;
  border: 2px solid #b3b6b8;
  border-top: 1px solid #c8c8c8;
  border-left-width: 1px;
  overflow: hidden;
`;

const MenuSection = styled.div`
  display: grid;
  grid-template-columns: 256px 1fr;
  grid-auto-rows: 41.7px;
`;

const MenuSeparator = styled.hr`
  height: 3px;
  margin: 6px 20px 6.8px 40px;
  border: 0;
  background: linear-gradient(90deg, transparent, #cfcfcf 20% 60%, transparent);
`;

const MenuItem = styled.div`
  display: flex;
  align-items: center;
  gap: 15.5px;
  padding-left: 5px;
  font-size: 18.2px;
  color: ${(p) => (p.$active ? '#fff' : '#323232')};
  background: ${(p) => (p.$active ? '#d25f95' : 'transparent')};
`;

const Hint = styled.div`
  position: absolute;
  left: 475px;
  top: 689px;
  width: 387px;
  height: 30px;
  padding-left: 10px;
  background: #e8e6e2;
  box-shadow: 0 1px 4px rgba(0, 0, 0, 0.4), 0 6px 18px rgba(0, 0, 0, 0.18);
  font-family: Inter, sans-serif;
  font-size: 17px;
  line-height: 30px;
  letter-spacing: 0.33px;
  color: #484746;
  white-space: nowrap;
`;

const CursorSvg = styled.svg`
  position: absolute;
  left: ${(p) => p.$x}px;
  top: ${(p) => p.$y}px;
  width: 20px;
  height: 30px;
  overflow: visible;
  filter: drop-shadow(0 2px 2px rgba(0, 0, 0, 0.4));
`;

/* ---------- search popup ---------- */

const Search = styled.div`
  position: absolute;
  left: 147px;
  top: 400px;
  width: 320px;
  box-shadow: 2px 10px 28px rgba(0, 0, 0, 0.3);
  background: #ebebeb;
`;

const SearchList = styled.div`
  border: 2px solid #141414;
  border-bottom: 0;
`;

const SearchItem = styled.div`
  display: flex;
  align-items: center;
  gap: 13.5px;
  height: 41.6px;
  padding: 0 0 2px 9px;
  font-size: 18.1px;
  color: ${(p) => (p.$active ? '#2c2327' : '#6b6b6b')};
  ${(p) => p.$active && css`
    background:
      linear-gradient(90deg, #cd6c9b 20%, transparent 95%) top / 100% 2px no-repeat,
      linear-gradient(90deg, #cd6c9b 20%, transparent 95%) bottom / 100% 2px no-repeat,
      linear-gradient(90deg, #deb3ca 10%, #ebebeb 85%);
  `}
`;

const SearchInput = styled.div`
  display: flex;
  align-items: center;
  justify-content: center;
  gap: 4px;
  height: 24px;
  padding-left: 4px;
  border: 2px solid #c9c9c9;
  background: #fff;
  color: #2c2c2c;
  font-size: 15.5px;
`;

const Caret = styled.i`
  width: 2px;
  height: 17px;
  background: #000;
`;

const Balloon = styled.div`
  position: absolute;
  left: 449px;
  top: 887px;
  width: 303px;
  height: 88px;
  border: 2px solid #3d3522;
  background: #fffbd0;
  box-shadow: 2px 8px 16px rgba(0, 0, 0, 0.3);
  font-family: Inter, sans-serif;
`;

const BalloonHead = styled.div`
  display: flex;
  align-items: center;
  gap: 19px;
  height: 54px;
  padding-left: 9px;
  background: #f7d072;
  color: #17130a;
  font-size: 18.2px;
  font-style: italic;
  letter-spacing: -0.25px;
`;

const BalloonBody = styled.div`
  padding-left: 6px;
  font-size: 12.6px;
  line-height: 33px;
  font-weight: 500;
  letter-spacing: 0.28px;
  color: #26241b;
  white-space: nowrap;
`;

/* ---------- canvas component ---------- */

const Node = styled.div`
  position: absolute;
  left: 258px;
  top: 525px;
  display: flex;
  align-items: center;
  justify-content: space-between;
  width: 121px;
  height: 135px;
  padding: 0 20px 0 8px;
  border: 2px solid #24502e;
  border-radius: 7px;
  background: linear-gradient(rgba(255, 255, 255, 0.9), rgba(255, 255, 255, 0.45) 16px, transparent 16px), linear-gradient(#dde84f, #bfcb43);
  box-shadow: 0 -1px 0 1px rgba(255, 255, 255, 0.7), 1px 2px 4px rgba(0, 0, 0, 0.25);
`;

const Ports = styled.div`
  display: flex;
  flex-direction: column;
  align-items: ${(p) => (p.$left ? 'flex-end' : 'flex-start')};
  gap: ${(p) => (p.$left ? 36 : 15)}px;
  width: 14px;
  padding-bottom: 1px;
  font-family: "Liberation Serif", serif;
  font-size: 22px;
  line-height: 26px;
  color: #121406;
`;

const NodeGlyph = styled.div`
  width: 42px;
  height: 42px;
`;

const Grip = styled.i`
  position: absolute;
  left: ${(p) => p.$x}px;
  top: ${(p) => p.$y}px;
  width: 11px;
  height: 20px;
  border: 4px solid #050505;
  background: #fff;
  ${(p) => (p.$right
    ? css`border-left: 0; border-radius: 0 11px 11px 0;`
    : css`border-right: 0; border-radius: 11px 0 0 11px;`)}
`;

const Overlay = styled.svg`
  position: absolute;
  left: ${(p) => p.$x}px;
  top: ${(p) => p.$y}px;
  width: ${(p) => p.$w}px;
  height: ${(p) => p.$h}px;
  overflow: visible;
  filter: drop-shadow(0 3px 4px rgba(0, 0, 0, 0.35));
`;

/* ---------- data ---------- */

const leadingTabs = [['Params', 84], ['Maths', 70.5], ['Sets', 57], ['Vector', 62.5]];
const trailingTabs = [['Surface', 83], ['Mesh', 66], ['Intersect', 91], ['Transform', 102], ['Display', 81], ['Wb', 47], ['Kangaroo2', 90]];

const groups = [
  { name: 'Analysis', width: 279, sections: [
    [100, ['controlPolygon', 'endPoints', 'curveMiddle', 'polygonCenter']],
    [61, ['closestPoint', 'discontinuity']],
    [60.5, ['evaluateCurve', 'pointOnCurve']],
    [57.5, ['evaluateLength', 'length']]] },
  { name: 'Division', width: 113.5, sections: [[56, ['divide', 'dash']], [57.5, ['contour', 'frames']]] },
  { name: 'Primitive', width: 173.5, sections: [[56.5, ['line', 'vectorLine']], [59.5, ['circle', 'circle3']], [57.5, ['arc', 'arcSed']]] },
  { name: 'Spline', width: 157, sections: [[99.5, ['tangentCurve', 'bezier', 'interpolate', 'polyline']], [57.5, ['blend', 'catenary']]] },
  { name: 'Util', width: 157, sections: [[99.5, ['explode', 'flip', 'rebuild', 'join']], [57.5, ['fillet', 'offset']]] },
];

const menuSections = [
  [['controlPoints', 'Control Points'], ['controlPolygon', 'Control Polygon'], ['curveMiddle', 'Curve Middle'], ['deconstructArc', 'Deconstruct Arc'], ['deconstructRect', 'Deconstuct Rectangle'], ['endPoints', 'End Points'], ['polygonCenter', 'Polygon Center']],
  [['closed', 'Closed'], ['curvatureGraph', 'Curvature Graph'], ['closestPoint', 'Curve Closest Point'], ['nearestObject', 'Curve Nearest Object'], ['proximity', 'Curve Proximity'], ['side', 'Curve Side'], ['discontinuity', 'Discontinuity'], ['extremes', 'Extremes'], ['planar', 'Planar']],
  [['curvature', 'Curvature'], ['curveFrame', 'Curve Frame'], ['derivatives', 'Derivatives'], ['evaluateCurve', 'Evaluate Curve'], ['horizontalFrame', 'Horizontal Frame'], ['perpFrame', 'Perp Frame'], ['pointOnCurve', 'Point On Curve'], ['torsion', 'Torsion']],
  [['curveDomain', 'Curve Domain'], ['evaluateLength', 'Evaluate Length'], ['length', 'Length'], ['lengthDomain', 'Length Domain'], ['lengthParameter', 'Length Parameter'], ['segmentLengths', 'Segment Lengths']],
  [['pointInCurve', 'Point In Curve'], ['pointInCurves', 'Point in Curves']],
];

const searchResults = [
  ['scale', 'Scale'], ['grab', 'Grab'], ['seam', 'Seam'], ['load', 'Load'], ['beam', 'Beam'],
  ['evaluateBox', 'Evaluate Box'], ['evaluateField', 'Evaluate Field'], ['meshEval', 'Mesh Eval'],
  ['evaluateSurface', 'Evaluate Surface'], ['evaluateLength', 'Evaluate Length'],
  ['evaluateCurve', 'Evaluate Curve'], ['evaluate', 'Evaluate'],
];

/* ---------- composition ---------- */

const DownArrow = ({ color = '#9a9a9a' }) => (
  <FooterArrow viewBox="0 0 12 13"><path d="M6 0V9" stroke={color} strokeWidth="2" /><path d="M0 5.5H12L6 12Z" fill={color} /></FooterArrow>
);

const Cursor = ({ x, y }) => (
  <CursorSvg viewBox="0 0 20 30" $x={x} $y={y}>
    <path d="M1 0V23L6.2 18.4L10.2 27.4L14.4 25.4L10.6 16.8L17.6 16.4Z" fill="#000" stroke="#fff" strokeWidth="2" />
  </CursorSvg>
);

const Header = ({ shift, framed }) => (
  <>
    <TabStrip $shift={shift}>
      {leadingTabs.map(([name, width]) => <Tab key={name} $width={width}>{name}</Tab>)}
      <ActiveTab>Curve</ActiveTab>
      {trailingTabs.map(([name, width]) => <Tab key={name} $width={width}>{name}</Tab>)}
    </TabStrip>
    <Ribbon $shift={shift} $framed={framed}>
      {groups.map((group) => (
        <Group key={group.name} $width={group.width}>
          <GroupBody>
            {group.sections.map(([width, names], i) => (
              <Section key={names[0]} $width={width} $first={i === 0} $last={i === group.sections.length - 1}>
                {names.map((name) => <ToolCell key={name}><Icon name={name} /></ToolCell>)}
              </Section>
            ))}
          </GroupBody>
          <GroupFooter><GroupTitle>{group.name}</GroupTitle><DownArrow /></GroupFooter>
        </Group>
      ))}
    </Ribbon>
  </>
);

const FileToolbar = ({ shift }) => (
  <Toolbar $shift={shift}>
    <ToolButton $after={11}><Icon name="open" size={28} flat /></ToolButton>
    <ToolButton $after={10}><Icon name="save" size={28} flat /></ToolButton>
    <ToolDivider />
    <ZoomBox>
      <ZoomValue>129%</ZoomValue>
      <Chevron viewBox="0 0 12 8"><path d="M1 1L6 6L11 1" fill="none" stroke="#444" strokeWidth="2" /></Chevron>
    </ZoomBox>
    <ToolButton $after={25}><Icon name="extents" flat /></ToolButton>
    <ToolButton $after={24}><Icon name="eye" flat /></ToolButton>
    <ToolButton $after={0}><Icon name="sketch" flat /></ToolButton>
  </Toolbar>
);

const AnalysisMenu = () => (
  <Menu>
    <MenuHeader><Mirrored><span>Analysis</span><DownArrow color="#777" /></Mirrored></MenuHeader>
    <MenuBody>
      {menuSections.map((items, i) => (
        <React.Fragment key={items[0][1]}>
          {i > 0 && <MenuSeparator />}
          <MenuSection>
            {items.map(([icon, label]) => (
              <MenuItem key={label} $active={label === 'Evaluate Curve'}><Icon name={icon} />{label}</MenuItem>
            ))}
          </MenuSection>
        </React.Fragment>
      ))}
    </MenuBody>
  </Menu>
);

const SearchPopup = () => (
  <Search>
    <SearchList>
      {searchResults.map(([icon, label]) => (
        <SearchItem key={label} $active={label === 'Evaluate Curve'}><Icon name={icon} />{label}</SearchItem>
      ))}
    </SearchList>
    <SearchInput>eval<Caret /></SearchInput>
  </Search>
);

const EvaluateNode = () => (
  <>
    <Grip $x={248} $y={552} /><Grip $x={248} $y={613} />
    <Grip $x={378} $y={541} $right /><Grip $x={378} $y={583} $right /><Grip $x={378} $y={624} $right />
    <Node>
      <Ports $left><span>C</span><span>t</span></Ports>
      <NodeGlyph><Icon name="evaluateCurve" size={42} /></NodeGlyph>
      <Ports><span>P</span><span>T</span><span>A</span></Ports>
    </Node>
    <Overlay $x={350} $y={501} $w={29} $h={29} viewBox="0 0 29 29">
      <defs>
        <linearGradient id="note" x1="0" y1="0" x2="0" y2="1">
          <stop offset="0" stopColor="#fff3cf" /><stop offset="0.3" stopColor="#f3cd7c" /><stop offset="1" stopColor="#e3972f" />
        </linearGradient>
      </defs>
      <path d="M3 1H26Q28 1 28 3V21Q28 23 26 23H19L15 27L11 23H3Q1 23 1 21V3Q1 1 3 1Z" fill="url(#note)" stroke="#8d6a20" strokeWidth="1.5" />
    </Overlay>
  </>
);

export default function App() {
  return (
    <Page>
      <GlobalStyle />
      <GradientDefs />
      <Card>
        <Column $width={940} $top={30}>
          <Panel $height={1130} $framed>
            <Header shift={5} framed />
            <Toolbar $shift={5} />
            <Canvas $x={117} />
            <AnalysisMenu />
            <Hint>Evaluate a curve at the specified parameter.</Hint>
            <Cursor x={467} y={655} />
          </Panel>
          <Caption $top={12}>
            <Headline>navigate</Headline>
            <Subline>for overview</Subline>
          </Caption>
        </Column>
        <Column $width={940} $top={28}>
          <Panel $height={1130}>
            <Header shift={2} />
            <FileToolbar shift={2} />
            <Canvas $x={114} />
            <SearchPopup />
            <Cursor x={400} y={837} />
            <Balloon>
              <BalloonHead><Icon name="evaluateCurve" />Evaluate Curve</BalloonHead>
              <BalloonBody>Evaluate a curve at the specified parameter.</BalloonBody>
            </Balloon>
          </Panel>
          <Caption $top={14}>
            <Headline>double-click / space</Headline>
            <Subline>for fast search</Subline>
          </Caption>
        </Column>
        <Column $width={926} $top={30}>
          <Panel $height={1128}>
            <Header shift={-6} />
            <FileToolbar shift={-6} />
            <Canvas $x={106} />
            <Overlay $x={136} $y={12} $w={100} $h={100} viewBox="0 0 100 100">
              <path d="M79 12C50 -3 10 14 9 50C9 76 28 91 50 91C76 90 91 74 91 49C90 30 70 13 36 26" fill="none" stroke="url(#ring)" strokeWidth="12" />
            </Overlay>
            <Overlay $x={299} $y={0} $w={6} $h={2} viewBox="0 0 6 2">
              <path d="M0 0H6L4 1.6H1Z" fill="#b5241a" />
            </Overlay>
            <EvaluateNode />
            <Cursor x={313} y={585} />
            <Overlay $x={146} $y={472} $w={320} $h={340} viewBox="0 0 960 1020">
              <g fill="none" stroke="url(#marker)" strokeWidth="38" strokeLinecap="round" strokeLinejoin="round">
                <path d="M112 957C250 900 350 790 430 680" />
                <path d="M333 654C400 640 450 610 505 562C480 620 465 700 458 795C440 740 410 680 333 654Z" />
                <path d="M370 655C420 650 460 620 480 600L450 700" />
              </g>
            </Overlay>
          </Panel>
          <Caption $top={14} $indent={22}>
            <Headline>Ctrl + Alt</Headline>
            <Subline>for search location</Subline>
          </Caption>
        </Column>
      </Card>
    </Page>
  );
}
